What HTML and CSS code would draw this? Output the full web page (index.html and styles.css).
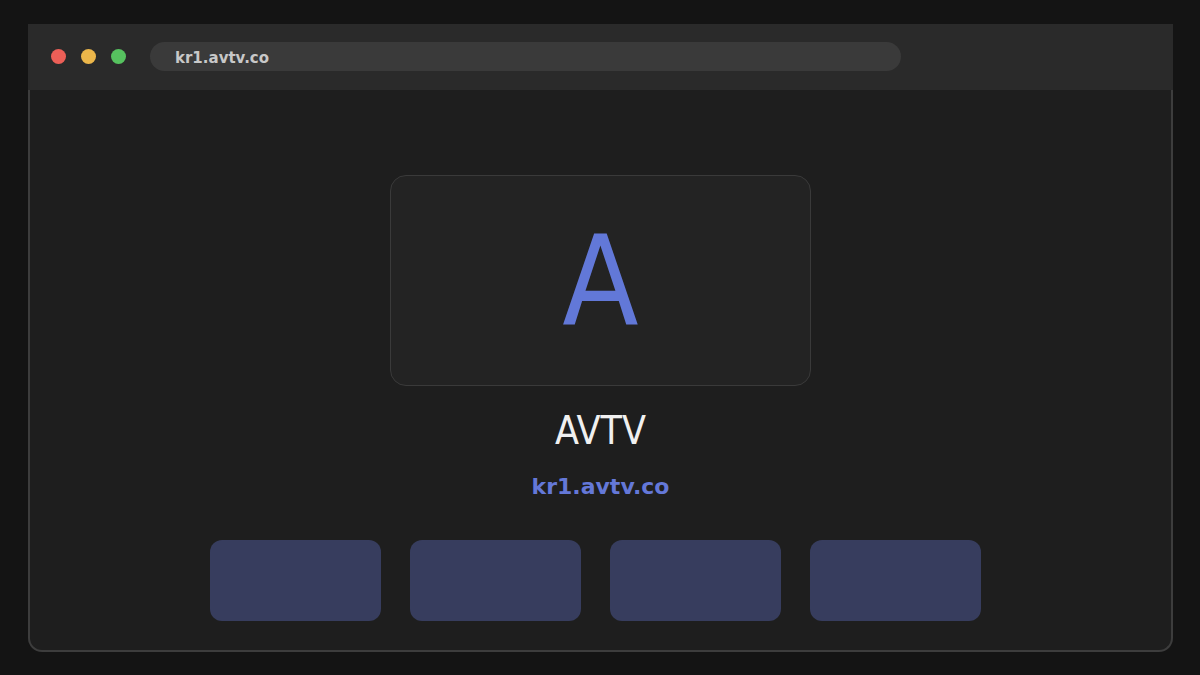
FILE: index.html
```html
<!DOCTYPE html>
<html lang="en">
<head>
    <meta charset="UTF-8">
    <meta name="viewport" content="width=device-width, initial-scale=1.0">
    <title>AVTV</title>
    <link rel="stylesheet" href="styles.css">
</head>
<body>
    <div class="browser-window">
        <div class="browser-bar">
            <div class="dots">
                <span class="dot red"></span>
                <span class="dot yellow"></span>
                <span class="dot green"></span>
            </div>
            <div class="address">kr1.avtv.co</div>
        </div>
        <div class="browser-body">
            <div class="logo-card">
                <span class="logo-letter">A</span>
            </div>
            <h1 class="site-name">AVTV</h1>
            <div class="site-url">kr1.avtv.co</div>
            <div class="tiles">
                <div class="tile"></div>
                <div class="tile"></div>
                <div class="tile"></div>
                <div class="tile"></div>
            </div>
        </div>
    </div>
</body>
</html>
```

FILE: styles.css
```css
/* Ventana tipo navegador */
body {
    margin: 0;
    background-color: #141414;
    font-family: "DejaVu Sans", sans-serif;
    padding: 24px 27px 0 28px;
}
.browser-window {
    width: 1145px;
}
.browser-bar {
    height: 66px;
    box-sizing: border-box;
    background-color: #2a2a2a;
    display: flex;
    align-items: center;
    padding: 0 0 2px 23px;
}
.dots {
    display: flex;
    gap: 15px;
}
.dot {
    width: 15px;
    height: 15px;
    border-radius: 50%;
}
.dot.red { background-color: #ec5f57; }
.dot.yellow { background-color: #ebb64a; }
.dot.green { background-color: #56c25f; }
.address {
    margin-left: 24px;
    width: 751px;
    height: 29px;
    border-radius: 15px;
    background-color: #3a3a3a;
    color: #c8c8c8;
    font-weight: bold;
    font-size: 15px;
    line-height: 32px;
    padding-left: 25px;
    box-sizing: border-box;
}

.browser-body {
    height: 562px;
    box-sizing: border-box;
    background-color: #1e1e1e;
    border: 2px solid #3d3d3d;
    border-top: none;
    border-radius: 0 0 14px 14px;
    display: flex;
    flex-direction: column;
    align-items: center;
    padding-top: 85px;
}
.logo-card {
    width: 421px;
    height: 211px;
    box-sizing: border-box;
    background-color: #232323;
    border: 1px solid #3a3a3a;
    border-radius: 16px;
    display: flex;
    align-items: center;
    justify-content: center;
}
.logo-letter {
    font-family: "DejaVu Sans Condensed", "DejaVu Sans", sans-serif;
    font-size: 124px;
    line-height: 1;
    color: #6278d8;
}
.site-name {
    margin: 22px 0 0;
    font-family: "DejaVu Sans Condensed", "DejaVu Sans", sans-serif;
    font-weight: normal;
    font-size: 39px;
    line-height: 46px;
    color: #f0f0f0;
}
.site-url {
    margin-top: 20px;
    font-weight: bold;
    font-size: 22px;
    line-height: 26px;
    color: #6478d8;
}
.tiles {
    margin-top: 40px;
    display: flex;
    gap: 29px;
    padding-right: 10px;
}
.tile {
    width: 171px;
    height: 81px;
    border-radius: 12px;
    background-color: #373d5e;
}
```
